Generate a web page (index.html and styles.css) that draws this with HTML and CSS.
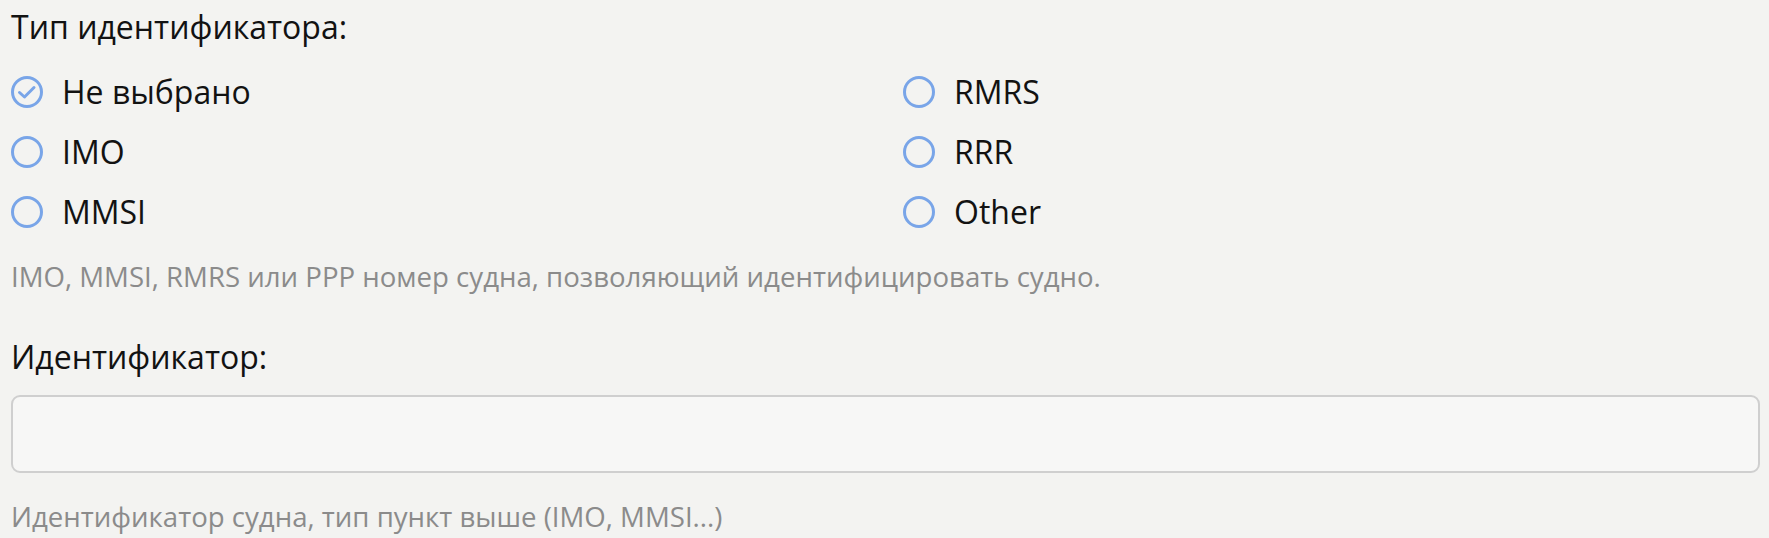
FILE: index.html
```html
<!DOCTYPE html>
<html lang="ru">
<head>
    <meta charset="UTF-8">
    <title>Идентификатор судна</title>
    <link rel="stylesheet" href="styles.css">
</head>
<body>
    <form class="vessel-form">
        <!-- Тип идентификатора -->
        <div class="field">
            <div class="field-title">Тип идентификатора:</div>
            <div class="radio-grid">
                <label class="radio checked"><span class="radio-mark"><svg viewBox="0 0 32 32"><circle cx="16" cy="16" r="14.5" /><path d="M8.5 16.5 L13.5 21 L23 11.5" /></svg></span>Не выбрано</label>
                <label class="radio"><span class="radio-mark"><svg viewBox="0 0 32 32"><circle cx="16" cy="16" r="14.5" /></svg></span>RMRS</label>
                <label class="radio"><span class="radio-mark"><svg viewBox="0 0 32 32"><circle cx="16" cy="16" r="14.5" /></svg></span>IMO</label>
                <label class="radio"><span class="radio-mark"><svg viewBox="0 0 32 32"><circle cx="16" cy="16" r="14.5" /></svg></span>RRR</label>
                <label class="radio"><span class="radio-mark"><svg viewBox="0 0 32 32"><circle cx="16" cy="16" r="14.5" /></svg></span>MMSI</label>
                <label class="radio"><span class="radio-mark"><svg viewBox="0 0 32 32"><circle cx="16" cy="16" r="14.5" /></svg></span>Other</label>
            </div>
            <div class="hint hint-first">IMO, MMSI, RMRS или PPP номер судна, позволяющий идентифицировать судно.</div>
        </div>

        <!-- Идентификатор -->
        <div class="field field-second">
            <label class="field-title" for="ident">Идентификатор:</label>
            <input type="text" id="ident" class="text-input">
            <div class="hint hint-last">Идентификатор судна, тип пункт выше (IMO, MMSI...)</div>
        </div>
    </form>
</body>
</html>
```

FILE: styles.css
```css
/* General */
body {
    margin: 0;
    padding: 0 9px 0 11px;
    background-color: #f3f3f1;
    color: #121212;
    font-family: 'Open Sans', 'Noto Sans', sans-serif;
    font-size: 32px;
    line-height: 40px;
}

.vessel-form {
    display: flex;
    flex-direction: column;
}

.field {
    display: flex;
    flex-direction: column;
}

.field-title {
    display: block;
    margin-top: 7px;
    margin-bottom: 15px;
}

.field-second .field-title {
    margin-top: 41px;
    margin-bottom: 18px;
}

/* Radios */
.radio-grid {
    display: grid;
    grid-template-columns: 1fr 1fr;
    column-gap: 35px;
}

.radio {
    display: flex;
    align-items: center;
    height: 60px;
    line-height: 60px;
    gap: 19px;
}

.radio-mark {
    width: 32px;
    height: 32px;
    flex-shrink: 0;
}

.radio-mark svg {
    display: block;
    width: 32px;
    height: 32px;
    fill: none;
    stroke: #79a5e8;
    stroke-width: 3;
}

.radio-mark path {
    stroke-width: 3;
    stroke-linecap: round;
    stroke-linejoin: round;
}

/* Hints */
.hint {
    color: #8b8b8b;
    font-size: 27.6px;
}

.hint-first {
    margin-top: 14px;
}

.hint-last {
    margin-top: 23px;
}

/* Input */
.text-input {
    box-sizing: border-box;
    height: 78px;
    width: 100%;
    margin: 0;
    border: 2px solid #cfcfcf;
    border-radius: 9px;
    background-color: #f7f7f6;
    font: inherit;
}
```
